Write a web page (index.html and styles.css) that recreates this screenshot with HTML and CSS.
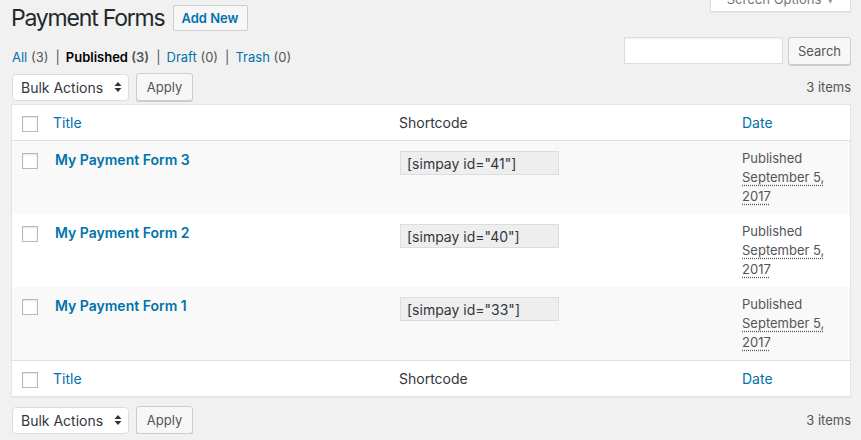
FILE: index.html
```html
<!DOCTYPE html>
<html>
<head>
<meta charset="utf-8">
<link rel="stylesheet" href="styles.css">
</head>
<body>
<div class="wrap">
  <div class="head-row">
    <h1 class="page-title">Payment Forms</h1>
    <a class="btn add-new">Add New</a>
    <div class="screen-tab">Screen Options <span class="caret">▾</span></div>
  </div>
  <div class="filter-row">
    <ul class="subsubsub">
      <li><a>All <span class="count">(3)</span></a><span class="sep">|</span></li>
      <li><a class="current">Published <span class="count">(3)</span></a><span class="sep">|</span></li>
      <li><a>Draft <span class="count">(0)</span></a><span class="sep">|</span></li>
      <li><a>Trash <span class="count">(0)</span></a></li>
    </ul>
    <div class="search-box">
      <input class="search-input" type="text">
      <button class="btn search-btn">Search</button>
    </div>
  </div>
  <div class="tablenav top">
    <div class="bulk">
      <div class="select">Bulk Actions
        <svg class="updown" width="8" height="12" viewBox="0 0 8 12"><path d="M4 1 L7.5 5 H0.5 Z M4 11 L7.5 7 H0.5 Z" fill="#333"/></svg>
      </div>
      <button class="btn apply">Apply</button>
    </div>
    <div class="items">3 items</div>
  </div>
  <table class="list">
    <thead>
      <tr>
        <th class="col-check"><span class="cb"></span></th>
        <th class="col-title"><a>Title</a></th>
        <th class="col-sc">Shortcode</th>
        <th class="col-date"><a>Date</a></th>
      </tr>
    </thead>
    <tbody>
      <tr class="alt">
        <td class="col-check"><span class="cb"></span></td>
        <td class="col-title"><a class="row-title">My Payment Form 3</a></td>
        <td class="col-sc"><div class="sc-input">[simpay id="41"]</div></td>
        <td class="col-date">Published<br><abbr>September 5, 2017</abbr></td>
      </tr>
      <tr>
        <td class="col-check"><span class="cb"></span></td>
        <td class="col-title"><a class="row-title">My Payment Form 2</a></td>
        <td class="col-sc"><div class="sc-input">[simpay id="40"]</div></td>
        <td class="col-date">Published<br><abbr>September 5, 2017</abbr></td>
      </tr>
      <tr class="alt">
        <td class="col-check"><span class="cb"></span></td>
        <td class="col-title"><a class="row-title">My Payment Form 1</a></td>
        <td class="col-sc"><div class="sc-input">[simpay id="33"]</div></td>
        <td class="col-date">Published<br><abbr>September 5, 2017</abbr></td>
      </tr>
    </tbody>
    <tfoot>
      <tr>
        <th class="col-check"><span class="cb"></span></th>
        <th class="col-title"><a>Title</a></th>
        <th class="col-sc">Shortcode</th>
        <th class="col-date"><a>Date</a></th>
      </tr>
    </tfoot>
  </table>
  <div class="tablenav bottom">
    <div class="bulk">
      <div class="select">Bulk Actions
        <svg class="updown" width="8" height="12" viewBox="0 0 8 12"><path d="M4 1 L7.5 5 H0.5 Z M4 11 L7.5 7 H0.5 Z" fill="#333"/></svg>
      </div>
      <button class="btn apply">Apply</button>
    </div>
    <div class="items">3 items</div>
  </div>
</div>
</body>
</html>
```

FILE: styles.css
```css
html, body {
  margin: 0;
  padding: 0;
  background: #f1f1f1;
}
body {
  font-family: Inter, "Liberation Sans", sans-serif;
  font-size: 13px;
  color: #444;
  overflow: hidden;
}
a { color: #0073aa; text-decoration: none; }
.wrap {
  width: 840px;
  margin-left: 11px;
  display: flex;
  flex-direction: column;
}
.head-row {
  display: flex;
  align-items: center;
  height: 36px;
}
.page-title {
  margin: 0;
  font-size: 23px;
  font-weight: 400;
  color: #23282d;
  letter-spacing: -1.2px;
  line-height: 29px;
  margin-top: 1px;
  white-space: nowrap;
}
.btn {
  font-family: inherit;
  font-size: 13px;
  border: 1px solid #ccc;
  background: #f7f7f7;
  box-shadow: 0 1px 0 #ccc;
  border-radius: 3px;
  color: #555;
  box-sizing: border-box;
  display: inline-flex;
  align-items: center;
  justify-content: center;
  padding: 0 10px;
  white-space: nowrap;
}
.add-new {
  margin-left: 8px;
  height: 26px;
  width: 75px;
  padding: 0;
  font-weight: 600;
  color: #0073aa;
  background: #f7f7f7;
  border-color: #ccc;
  box-shadow: none;
  border-radius: 2px;
}
.screen-tab {
  margin-left: auto;
  align-self: flex-start;
  margin-top: -16px;
  width: 141px;
  height: 28px;
  box-sizing: border-box;
  background: #fff;
  border: 1px solid #ddd;
  border-top: none;
  box-shadow: 0 1px 1px rgba(0,0,0,0.04);
  color: #72777c;
  font-size: 13px;
  display: flex;
  align-items: center;
  justify-content: center;
  padding-top: 2px;
  white-space: nowrap;
}
.caret { margin-left: 6px; color: #999; }
.filter-row {
  display: flex;
  justify-content: space-between;
  align-items: flex-start;
  height: 37px;
}
.subsubsub {
  list-style: none;
  margin: 12px 0 0 1px;
  padding: 0;
  display: flex;
  font-size: 13px;
  line-height: 18px;
  color: #666;
}
.subsubsub li { display: flex; }
.subsubsub .sep { margin: 0 6px 0 7px; color: #555; }
.subsubsub .count { color: #555; }
.subsubsub a.current { color: #000; font-weight: 600; }
.search-box {
  display: flex;
  align-items: center;
  gap: 5px;
}
.search-input {
  width: 159px;
  height: 27px;
  box-sizing: border-box;
  border: 1px solid #ddd;
  background: #fff;
  box-shadow: inset 0 1px 2px rgba(0,0,0,0.07);
  margin: 0;
}
.search-btn {
  height: 28px;
  width: 63px;
  padding: 0;
  margin-top: 1px;
}
.tablenav {
  display: flex;
  justify-content: space-between;
  align-items: center;
  height: 28px;
}
.tablenav.top { margin-bottom: 3px; }
.tablenav.bottom { margin-top: 9px; }
.bulk { display: flex; align-items: center; }
.select {
  margin-left: 1px;
  width: 117px;
  height: 27px;
  box-sizing: border-box;
  background: #fff;
  border: 1px solid #ddd;
  border-radius: 4px;
  display: flex;
  align-items: center;
  padding-left: 8px;
  font-size: 14px;
  color: #32373c;
}
.updown { margin-left: auto; margin-right: 6px; }
.apply {
  margin-left: 7px;
  height: 28px;
  width: 57px;
  padding: 0;
  font-size: 13px;
  color: #555;
}
.items {
  color: #555;
  font-size: 13px;
}
.list {
  width: 840px;
  border-collapse: collapse;
  background: #fff;
  border: 1px solid #e5e5e5;
  box-shadow: 0 1px 1px rgba(0,0,0,0.04);
  table-layout: fixed;
}
.list th, .list td {
  text-align: left;
  vertical-align: top;
  font-weight: 400;
}
.list thead th, .list tfoot th {
  padding: 8px 10px;
  font-size: 14px;
  line-height: 19px;
  color: #32373c;
}
.list thead tr { border-bottom: 1px solid #e1e1e1; }
.list tfoot tr { border-top: 1px solid #e1e1e1; }
.list td {
  padding: 8px 10px;
  font-size: 13px;
  line-height: 19px;
  color: #555;
}
.list tbody tr.alt { background: #f9f9f9; }
.list th.col-check, .list td.col-check { width: 21px; padding: 0 0 0 10px; }
.list th.col-check .cb { margin-top: 11px; }
.list td.col-check .cb { margin-top: 12px; }
.cb {
  display: block;
  width: 16px;
  height: 16px;
  box-sizing: border-box;
  border: 1px solid #b4b9be;
  background: #fff;
  box-shadow: inset 0 1px 2px rgba(0,0,0,0.1);
}
.list th.col-title { width: 326px; padding-left: 10px; }
.list td.col-title { width: 324px; padding-left: 12px; padding-right: 10px; padding-top: 9px; }
.row-title { font-size: 14px; font-weight: 600; }
.list th.col-sc { width: 323px; }
.list td.col-sc { width: 322px; padding-top: 10px; padding-left: 11px; }
.sc-input {
  width: 159px;
  height: 24px;
  box-sizing: border-box;
  border: 1px solid #ddd;
  background: #eee;
  font-size: 14px;
  color: #32373c;
  display: flex;
  align-items: center;
  padding-left: 6px;
}
.list td.col-date { padding-right: 12px; padding-top: 8px; padding-bottom: 8px; }
abbr {
  text-decoration: underline dotted #555;
  text-underline-offset: 3px;
}
```
